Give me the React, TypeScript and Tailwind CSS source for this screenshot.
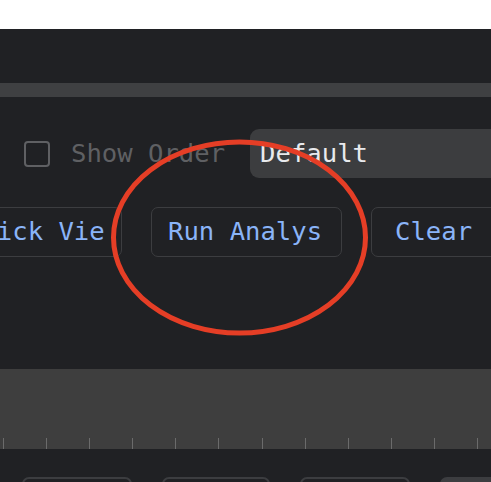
export default function App() {
  const ticks = Array.from({ length: 12 });
  return (
    <div className="relative h-[482px] w-[491px] overflow-hidden bg-[#202124] font-['DejaVu_Sans_Mono',monospace] text-[25.6px] leading-none">
      <div className="h-[29px] bg-white" />
      <div className="h-[54px]" />
      <div className="h-[14px] bg-[#3f4042]" />

      <div className="mt-[32px] flex h-[49px] items-center">
        <div className="ml-[24px] h-[26px] w-[26px] shrink-0 rounded-[4px] border-2 border-[#5f6063]" />
        <span className="ml-[21px] shrink-0 whitespace-nowrap text-[#5f6063]">Show Order</span>
        <div className="ml-[25px] flex h-full min-w-[300px] shrink-0 items-center rounded-[9px] bg-[#3c3d3f] pl-[10px] text-[#e8eaed]">
          Default
        </div>
      </div>

      <div className="mt-[29px] flex h-[50px] gap-[29px] text-[#8ab4f8]">
        <button className="-ml-[52px] flex h-full w-[174px] shrink-0 items-center rounded-[7px] border-[1.5px] border-[#3c3d40] px-[17px]">
          <span className="block overflow-hidden whitespace-nowrap">Quick View</span>
        </button>
        <button className="flex h-full w-[191px] shrink-0 items-center rounded-[7px] border-[1.5px] border-[#3c3d40] px-[16px]">
          <span className="block w-[154px] overflow-hidden whitespace-nowrap">Run Analysis</span>
        </button>
        <button className="flex h-full w-[191px] shrink-0 items-center rounded-[7px] border-[1.5px] border-[#3c3d40] px-[23px]">
          <span className="block overflow-hidden whitespace-nowrap">Clear</span>
        </button>
      </div>

      <div className="mt-[112px] flex h-[80px] items-end bg-[#3e3e3e] pl-[3px]">
        {ticks.map((_, i) => (
          <div key={i} className="h-[11px] w-[43.1px] shrink-0 border-l-[1.5px] border-[#6b6b6b]" />
        ))}
      </div>

      <div className="mt-[28px] flex gap-[30px] pl-[22px]">
        <div className="h-[20px] w-[110px] shrink-0 rounded-t-[7px] border-2 border-[#3c3d40]" />
        <div className="h-[20px] w-[108px] shrink-0 rounded-t-[7px] border-2 border-[#3c3d40]" />
        <div className="h-[20px] w-[110px] shrink-0 rounded-t-[7px] border-2 border-[#3c3d40]" />
        <div className="h-[20px] w-[80px] shrink-0 rounded-t-[7px] bg-[#3c3d40]" />
      </div>

      <svg className="pointer-events-none absolute left-0 top-0" width="491" height="482">
        <ellipse cx="239.5" cy="237.5" rx="126" ry="95.5" fill="none" stroke="#e53e26" strokeWidth="5" />
      </svg>
    </div>
  );
}
